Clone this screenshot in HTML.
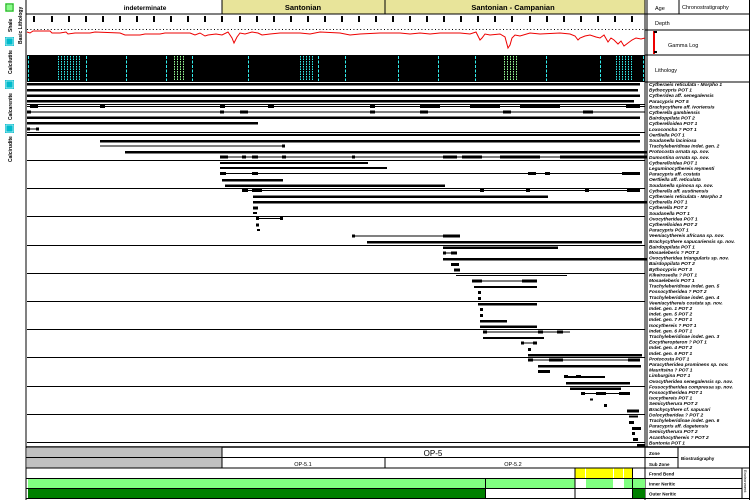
<!DOCTYPE html>
<html><head><meta charset="utf-8"><style>
html,body{margin:0;padding:0;background:#fff;width:750px;height:500px;overflow:hidden}
svg{display:block;font-family:"Liberation Sans",sans-serif}
</style></head><body>
<svg width="750" height="500" viewBox="0 0 750 500" xmlns="http://www.w3.org/2000/svg">
<rect x="0" y="0" width="750" height="500" fill="#fff"/>
<!-- left legend column -->
<line x1="26" y1="0" x2="26" y2="500" stroke="#000" stroke-width="1"/>
<rect x="5" y="3" width="9" height="9" fill="#8f8"/><rect x="6" y="4" width="7" height="7" fill="none" stroke="#060" stroke-width="0.6"/>
<rect x="5" y="37" width="9" height="9" fill="#0bc"/><rect x="6" y="38" width="7" height="7" fill="none" stroke="#fff" stroke-width="0.6"/>
<rect x="5" y="80" width="9" height="9" fill="#0bc"/><rect x="6" y="81" width="7" height="7" fill="none" stroke="#fff" stroke-width="0.6"/>
<rect x="5" y="124" width="9" height="9" fill="#0bc"/><rect x="6" y="125" width="7" height="7" fill="none" stroke="#fff" stroke-width="0.6"/>
<g font-size="5" font-weight="bold" fill="#000">
<text transform="translate(22,44) rotate(-90)">Basic Lithology</text>
<text transform="translate(12,32) rotate(-90)">Shale</text>
<text transform="translate(12,74) rotate(-90)">Calcilutite</text>
<text transform="translate(12,120) rotate(-90)">Calcarenite</text>
<text transform="translate(12,162) rotate(-90)">Calcirudite</text>
</g>
<!-- age header -->
<rect x="222" y="0" width="163" height="14" fill="#e8e49a"/>
<rect x="385" y="0" width="260" height="14" fill="#e8e49a"/>
<line x1="222" y1="0" x2="222" y2="14" stroke="#000"/>
<line x1="385" y1="0" x2="385" y2="14" stroke="#000"/>
<line x1="26" y1="14" x2="750" y2="14" stroke="#000"/>
<g font-size="6.5" fill="#000" text-anchor="middle" font-weight="bold">
<text x="145" y="10">indeterminate</text>
<text x="303" y="10" font-size="7.5">Santonian</text>
<text x="513" y="10" font-size="7.5">Santonian - Campanian</text>
</g>
<!-- right header column -->
<line x1="645" y1="0" x2="645" y2="500" stroke="#000"/>
<line x1="647" y1="0" x2="647" y2="447" stroke="#000"/>
<line x1="679" y1="0" x2="679" y2="14" stroke="#000"/>
<line x1="645" y1="30" x2="750" y2="30" stroke="#000"/>
<line x1="645" y1="55" x2="750" y2="55" stroke="#000"/>
<line x1="645" y1="82" x2="750" y2="82" stroke="#000"/>
<g font-size="5.5" fill="#000">
<text x="655" y="10">Age</text><text x="682" y="9">Chronostratigraphy</text>
<text x="655" y="25">Depth</text>
<text x="668" y="47">Gamma Log</text>
<text x="655" y="72">Lithology</text>
</g>
<rect x="653" y="31" width="2" height="23" fill="#e00"/>
<rect x="654" y="31" width="3" height="2" fill="#000"/><rect x="654" y="51" width="3" height="2" fill="#000"/>
<!-- depth row -->
<g fill="#000">
<rect x="33" y="16" width="2" height="6"/><rect x="51" y="16" width="2" height="6"/><rect x="68" y="16" width="2" height="6"/><rect x="85" y="16" width="2" height="6"/><rect x="102" y="16" width="2" height="6"/><rect x="119" y="16" width="2" height="6"/><rect x="136" y="16" width="2" height="6"/><rect x="153" y="16" width="2" height="6"/><rect x="170" y="16" width="2" height="6"/><rect x="187" y="16" width="2" height="6"/><rect x="204" y="16" width="2" height="6"/><rect x="221" y="16" width="2" height="6"/><rect x="239" y="16" width="2" height="6"/><rect x="256" y="16" width="2" height="6"/><rect x="273" y="16" width="2" height="6"/><rect x="290" y="16" width="2" height="6"/><rect x="307" y="16" width="2" height="6"/><rect x="324" y="16" width="2" height="6"/><rect x="341" y="16" width="2" height="6"/><rect x="358" y="16" width="2" height="6"/><rect x="375" y="16" width="2" height="6"/><rect x="392" y="16" width="2" height="6"/><rect x="409" y="16" width="2" height="6"/><rect x="426" y="16" width="2" height="6"/><rect x="443" y="16" width="2" height="6"/><rect x="460" y="16" width="2" height="6"/><rect x="477" y="16" width="2" height="6"/><rect x="494" y="16" width="2" height="6"/><rect x="511" y="16" width="2" height="6"/><rect x="529" y="16" width="2" height="6"/><rect x="546" y="16" width="2" height="6"/><rect x="563" y="16" width="2" height="6"/><rect x="580" y="16" width="2" height="6"/><rect x="597" y="16" width="2" height="6"/><rect x="614" y="16" width="2" height="6"/><rect x="631" y="16" width="2" height="6"/>
</g>
<line x1="27" y1="29.5" x2="645" y2="29.5" stroke="#000" stroke-width="1" stroke-dasharray="1,2.4"/>
<!-- gamma log -->
<polyline fill="none" stroke="#e00" stroke-width="1" points="27,32 30,33 33,31 50,31 52,33 60,33 66,32 68,34 75,33 90,33 95,32 120,33 125,35 140,35 145,34 160,34 165,33 175,33 190,33 195,35 200,33 205,36 208,35 216,34 222,35 228,32 232,38 234,43 237,37 240,33 245,34 252,32 258,33 262,35 270,34 280,33 300,33 310,34 320,32 340,33 350,35 360,34 380,33 400,33 410,34 420,33 430,34 440,33 460,33 470,34 476,32 480,40 482,38 485,34 490,35 500,34 505,37 508,48 510,45 512,38 515,35 520,36 530,33 540,34 560,33 570,34 575,36 578,40 580,38 585,36 590,35 596,37 600,38 604,35 608,42 611,38 614,40 618,44 621,41 624,46 628,43 632,40 636,38 641,39 645,38"/>
<!-- lithology -->
<rect x="27" y="55" width="618" height="27" fill="#000"/>
<g stroke="#3ee" stroke-width="1" stroke-dasharray="3,1.5">
<line x1="28.5" y1="56" x2="28.5" y2="81"/><line x1="86.5" y1="56" x2="86.5" y2="81"/><line x1="126.5" y1="56" x2="126.5" y2="81"/><line x1="166.5" y1="56" x2="166.5" y2="81"/><line x1="192.5" y1="56" x2="192.5" y2="81"/><line x1="248.5" y1="56" x2="248.5" y2="81"/><line x1="318.5" y1="56" x2="318.5" y2="81"/><line x1="345.5" y1="56" x2="345.5" y2="81"/><line x1="398.5" y1="56" x2="398.5" y2="81"/><line x1="438.5" y1="56" x2="438.5" y2="81"/><line x1="475.5" y1="56" x2="475.5" y2="81"/><line x1="546.5" y1="56" x2="546.5" y2="81"/><line x1="600.5" y1="56" x2="600.5" y2="81"/><line x1="643.5" y1="56" x2="643.5" y2="81"/>
</g>
<g stroke="#3ee" stroke-width="1" stroke-dasharray="1.5,1">
<line x1="58.5" y1="56" x2="58.5" y2="81"/><line x1="61.5" y1="56" x2="61.5" y2="81"/><line x1="64.5" y1="56" x2="64.5" y2="81"/><line x1="67.5" y1="56" x2="67.5" y2="81"/><line x1="70.5" y1="56" x2="70.5" y2="81"/><line x1="73.5" y1="56" x2="73.5" y2="81"/><line x1="76.5" y1="56" x2="76.5" y2="81"/><line x1="79.5" y1="56" x2="79.5" y2="81"/>
<line x1="300.5" y1="56" x2="300.5" y2="81"/><line x1="303.5" y1="56" x2="303.5" y2="81"/><line x1="306.5" y1="56" x2="306.5" y2="81"/><line x1="309.5" y1="56" x2="309.5" y2="81"/><line x1="312.5" y1="56" x2="312.5" y2="81"/>
<line x1="616.5" y1="56" x2="616.5" y2="81"/><line x1="619.5" y1="56" x2="619.5" y2="81"/><line x1="622.5" y1="56" x2="622.5" y2="81"/><line x1="625.5" y1="56" x2="625.5" y2="81"/><line x1="628.5" y1="56" x2="628.5" y2="81"/><line x1="631.5" y1="56" x2="631.5" y2="81"/>
</g>
<g stroke="#9f9" stroke-width="1" stroke-dasharray="1.5,1">
<line x1="174.5" y1="56" x2="174.5" y2="81"/><line x1="177.5" y1="56" x2="177.5" y2="81"/><line x1="180.5" y1="56" x2="180.5" y2="81"/><line x1="183.5" y1="56" x2="183.5" y2="81"/>
<line x1="504.5" y1="56" x2="504.5" y2="81"/><line x1="507.5" y1="56" x2="507.5" y2="81"/><line x1="510.5" y1="56" x2="510.5" y2="81"/><line x1="513.5" y1="56" x2="513.5" y2="81"/><line x1="516.5" y1="56" x2="516.5" y2="81"/>
</g>
<!-- separators -->
<g stroke="#000" stroke-width="1">
<line x1="27" y1="104.5" x2="645" y2="104.5"/><line x1="27" y1="132.5" x2="645" y2="132.5"/><line x1="27" y1="160.5" x2="645" y2="160.5"/><line x1="27" y1="188.5" x2="645" y2="188.5"/><line x1="27" y1="216.5" x2="645" y2="216.5"/><line x1="27" y1="245.5" x2="645" y2="245.5"/><line x1="27" y1="273.5" x2="645" y2="273.5"/><line x1="27" y1="301.5" x2="645" y2="301.5"/><line x1="27" y1="329.5" x2="645" y2="329.5"/><line x1="27" y1="357.5" x2="645" y2="357.5"/><line x1="27" y1="386.5" x2="645" y2="386.5"/><line x1="27" y1="414.5" x2="645" y2="414.5"/><line x1="27" y1="442.5" x2="645" y2="442.5"/>
</g>
<line x1="26" y1="447" x2="750" y2="447" stroke="#000" stroke-width="1.5"/>
<!-- ranges -->
<g fill="#000">
<rect x="27" y="83" width="613" height="2.5"/>
<rect x="27" y="89" width="611" height="2.5"/>
<rect x="27" y="94.5" width="613" height="2.5"/>
<rect x="27" y="100" width="607" height="2.5"/>
<rect x="27" y="106" width="618" height="1"/><rect x="30" y="105" width="8" height="3"/><rect x="100" y="105" width="5" height="3"/><rect x="220" y="105" width="5" height="3"/><rect x="268" y="105" width="6" height="3"/><rect x="370" y="105" width="5" height="3"/><rect x="420" y="105" width="20" height="3"/><rect x="470" y="105" width="30" height="3"/><rect x="520" y="105" width="40" height="3"/><rect x="626" y="105" width="14" height="3"/>
<rect x="27" y="111.5" width="618" height="1"/><rect x="27" y="110.5" width="4" height="3"/><rect x="220" y="110.5" width="4" height="3"/><rect x="240" y="110.5" width="8" height="3"/><rect x="370" y="110.5" width="5" height="3"/><rect x="420" y="110.5" width="8" height="3"/><rect x="503" y="110.5" width="8" height="3"/><rect x="583" y="110.5" width="10" height="3"/>
<rect x="27" y="116.5" width="613" height="2.5"/>
<rect x="27" y="122" width="231" height="2.5"/>
<rect x="27" y="128.5" width="11" height="1"/><rect x="27" y="127.5" width="3" height="3"/><rect x="36" y="127.5" width="3" height="3"/>
<rect x="27" y="134" width="613" height="2"/>
<rect x="100" y="140" width="540" height="2.5"/>
<rect x="100" y="145.5" width="183" height="1"/><rect x="282" y="144.5" width="3" height="3"/>
<rect x="125" y="151" width="522" height="2.5"/>
<rect x="220" y="156.5" width="427" height="1"/><rect x="220" y="155.5" width="8" height="3"/><rect x="242" y="155.5" width="4" height="3"/><rect x="252" y="155.5" width="6" height="3"/><rect x="282" y="155.5" width="4" height="3"/><rect x="352" y="155.5" width="3" height="3"/><rect x="443" y="155.5" width="14" height="3"/><rect x="462" y="155.5" width="20" height="3"/><rect x="500" y="155.5" width="40" height="3"/><rect x="560" y="155.5" width="60" height="3"/><rect x="618" y="155.5" width="29" height="3"/>
<rect x="220" y="162" width="148" height="2"/>
<rect x="220" y="167" width="167" height="2"/>
<rect x="220" y="173" width="420" height="1"/><rect x="220" y="172" width="6" height="3"/><rect x="252" y="172" width="6" height="3"/><rect x="528" y="172" width="8" height="3"/><rect x="545" y="172" width="5" height="3"/><rect x="622" y="172" width="18" height="3"/>
<rect x="222" y="179" width="61" height="2.5"/>
<rect x="225" y="184.5" width="220" height="2.5"/>
<rect x="242" y="190" width="398" height="1"/><rect x="242" y="189" width="6" height="3"/><rect x="252" y="189" width="10" height="3"/><rect x="480" y="189" width="4" height="3"/><rect x="526" y="189" width="4" height="3"/><rect x="585" y="189" width="4" height="3"/><rect x="627" y="189" width="13" height="3"/>
<rect x="253" y="195.5" width="295" height="2.5"/>
<rect x="253" y="201" width="394" height="2.5"/>
<rect x="253" y="206.5" width="5" height="3"/>
<rect x="253" y="212" width="4" height="2"/>
<rect x="256" y="218" width="27" height="1"/><rect x="256" y="217" width="3" height="3"/><rect x="280" y="217" width="3" height="3"/>
<rect x="256" y="223.5" width="3" height="3"/>
<rect x="257" y="229" width="3" height="2"/>
<rect x="352" y="235.5" width="108" height="1"/><rect x="352" y="234.5" width="3" height="3"/><rect x="443" y="234.5" width="17" height="3"/>
<rect x="367" y="241" width="275" height="2.5"/>
<rect x="443" y="246.5" width="115" height="2.5"/>
<rect x="443" y="252.5" width="14" height="1"/><rect x="443" y="251.5" width="3" height="3"/><rect x="451" y="251.5" width="6" height="3"/>
<rect x="443" y="258" width="204" height="2.5"/>
<rect x="451" y="263" width="8" height="3"/>
<rect x="454" y="268.5" width="6" height="3"/>
<rect x="456" y="275" width="111" height="1"/>
<rect x="472" y="280.5" width="65" height="1"/><rect x="472" y="279.5" width="10" height="3"/><rect x="522" y="279.5" width="15" height="3"/>
<rect x="474" y="286" width="63" height="2"/>
<rect x="478" y="291" width="3" height="3"/>
<rect x="478" y="297" width="3" height="3"/>
<rect x="478" y="303" width="59" height="2.5"/>
<rect x="480" y="308" width="3" height="3"/>
<rect x="480" y="314" width="3" height="3"/>
<rect x="480" y="320" width="27" height="2.5"/>
<rect x="480" y="325.5" width="57" height="2.5"/>
<rect x="483" y="331.5" width="87" height="1"/><rect x="483" y="330.5" width="4" height="3"/><rect x="538" y="330.5" width="5" height="3"/><rect x="557" y="330.5" width="6" height="3"/>
<rect x="483" y="337" width="61" height="2"/>
<rect x="521" y="342.5" width="16" height="1"/><rect x="521" y="341.5" width="3" height="3"/><rect x="533" y="341.5" width="4" height="3"/>
<rect x="528" y="348" width="3" height="3"/>
<rect x="528" y="354" width="114" height="2.5"/>
<rect x="528" y="359.5" width="112" height="1"/><rect x="528" y="358.5" width="5" height="3"/><rect x="549" y="358.5" width="14" height="3"/><rect x="628" y="358.5" width="12" height="3"/>
<rect x="538" y="365" width="103" height="2.5"/>
<rect x="538" y="370" width="12" height="3"/>
<rect x="564" y="376" width="41" height="2"/><rect x="564" y="375" width="4" height="3"/><rect x="576" y="375" width="5" height="3"/>
<rect x="566" y="382" width="64" height="2.5"/>
<rect x="570" y="387.5" width="51" height="2.5"/>
<rect x="581" y="393" width="49" height="1"/><rect x="581" y="392" width="4" height="3"/><rect x="596" y="392" width="10" height="3"/><rect x="619" y="392" width="11" height="3"/>
<rect x="590" y="398.5" width="3" height="2"/>
<rect x="604" y="404" width="3" height="3"/>
<rect x="627" y="409.5" width="12" height="3"/>
<rect x="629" y="415.5" width="9" height="2"/>
<rect x="629" y="421" width="5" height="3"/>
<rect x="632" y="427" width="9" height="3"/>
<rect x="632" y="432" width="3" height="3"/>
<rect x="633" y="438" width="5" height="3"/>
<rect x="637" y="444" width="8" height="2.5"/>
</g>
<!-- species labels -->
<g font-size="4.8" font-style="italic" font-weight="bold" fill="#000">
<text x="649" y="86">Cytheraeis reticulata - Morpho 1</text>
<text x="649" y="91.6">Bythocypris POT 1</text>
<text x="649" y="97.2">Cytheridea aff. senegalensis</text>
<text x="649" y="102.8">Paracypris POT 5</text>
<text x="649" y="108.4">Brachycythere aff. ivoriensis</text>
<text x="649" y="114">Cytherella gambiensis</text>
<text x="649" y="119.6">Bairdoppilata POT 2</text>
<text x="649" y="125.2">Cytherelloidea POT 1</text>
<text x="649" y="130.8">Loxoconcha ? POT 1</text>
<text x="649" y="136.4">Oertliella POT 1</text>
<text x="649" y="142">Soudanella laciniosa</text>
<text x="649" y="147.6">Trachyleberidinae indet. gen. 2</text>
<text x="649" y="153.2">Protocosta ornata sp. nov.</text>
<text x="649" y="158.8">Dumontina ornata sp. nov.</text>
<text x="649" y="164.4">Cytherelloidea POT 1</text>
<text x="649" y="170">Leguminocythereis reymenti</text>
<text x="649" y="175.6">Paracypris aff. costata</text>
<text x="649" y="181.2">Oertliella aff. reticulata</text>
<text x="649" y="186.8">Soudanella spinosa sp. nov.</text>
<text x="649" y="192.4">Cytherella aff. austinensis</text>
<text x="649" y="198">Cytheraeis reticulata - Morpho 2</text>
<text x="649" y="203.6">Cytherella POT 1</text>
<text x="649" y="209.2">Cytherella POT 2</text>
<text x="649" y="214.8">Soudanella POT 1</text>
<text x="649" y="220.4">Ovocytheridea POT 1</text>
<text x="649" y="226">Cytherelloidea POT 2</text>
<text x="649" y="231.6">Paracypris POT 1</text>
<text x="649" y="237.2">Veeniacythereis africana sp. nov.</text>
<text x="649" y="242.8">Brachycythere sapucariensis sp. nov.</text>
<text x="649" y="248.4">Bairdoppilata POT 1</text>
<text x="649" y="254">Mosaeleberis ? POT 2</text>
<text x="649" y="259.6">Ovocytheridea triangularis sp. nov.</text>
<text x="649" y="265.2">Bairdoppilata POT 2</text>
<text x="649" y="270.8">Bythocypris POT 3</text>
<text x="649" y="276.4">Kikeirosedia ? POT 1</text>
<text x="649" y="282">Mosaeleberis POT 1</text>
<text x="649" y="287.6">Trachyleberidinae indet. gen. 5</text>
<text x="649" y="293.2">Fossocytheridea ? POT 2</text>
<text x="649" y="298.8">Trachyleberidinae indet. gen. 4</text>
<text x="649" y="304.4">Veeniacythereis costata sp. nov.</text>
<text x="649" y="310">Indet. gen. 1 POT 2</text>
<text x="649" y="315.6">Indet. gen. 5 POT 2</text>
<text x="649" y="321.2">Indet. gen. 7 POT 1</text>
<text x="649" y="326.8">Isocythereis ? POT 1</text>
<text x="649" y="332.4">Indet. gen. 6 POT 1</text>
<text x="649" y="338">Trachyleberidinae indet. gen. 3</text>
<text x="649" y="343.6">Eocytheropteron ? POT 1</text>
<text x="649" y="349.2">Indet. gen. 4 POT 2</text>
<text x="649" y="354.8">Indet. gen. 6 POT 1</text>
<text x="649" y="360.4">Protocosta POT 1</text>
<text x="649" y="366">Paracytheridea prominens sp. nov.</text>
<text x="649" y="371.6">Mauritsina ? POT 1</text>
<text x="649" y="377.2">Limburgina POT 1</text>
<text x="649" y="382.8">Ovocytheridea senegalensis sp. nov.</text>
<text x="649" y="388.4">Fossocytheridea compressa sp. nov.</text>
<text x="649" y="394">Fossocytheridea POT 1</text>
<text x="649" y="399.6">Isocythereis POT 1</text>
<text x="649" y="405.2">Semicytherura POT 2</text>
<text x="649" y="410.8">Brachycythere cf. sapucari</text>
<text x="649" y="416.4">Dolocytheridea ? POT 2</text>
<text x="649" y="422">Trachyleberidinae indet. gen. 6</text>
<text x="649" y="427.6">Paracypris aff. dagetensis</text>
<text x="649" y="433.2">Semicytherura POT 2</text>
<text x="649" y="438.8">Acanthocythereis ? POT 2</text>
<text x="649" y="444.4">Buntonia POT 1</text>
</g>
<!-- zone rows -->
<rect x="27" y="447.5" width="195" height="20" fill="#c0c0c0"/>
<line x1="26" y1="457.5" x2="645" y2="457.5" stroke="#000"/>
<line x1="222" y1="447" x2="222" y2="468" stroke="#000"/>
<line x1="385" y1="457.5" x2="385" y2="468" stroke="#000"/>
<line x1="26" y1="468" x2="750" y2="468" stroke="#000"/>
<g fill="#000" text-anchor="middle">
<text x="433" y="456" font-size="8">OP-5</text>
<text x="303" y="466" font-size="5.5">OP-5.1</text>
<text x="513" y="466" font-size="5.5">OP-5.2</text>
</g>
<line x1="678" y1="447" x2="678" y2="468" stroke="#000"/>
<line x1="645" y1="457.5" x2="678" y2="457.5" stroke="#000"/>
<g font-size="4.5" fill="#000" font-weight="bold"><text x="649" y="455">Zone</text><text x="649" y="466">Sub Zone</text><text x="681" y="460">Biostratigraphy</text></g>
<!-- environment -->
<rect x="575" y="468.5" width="10" height="9.5" fill="#ff0"/><rect x="586" y="468.5" width="27" height="9.5" fill="#ff0"/><rect x="614" y="468.5" width="9" height="9.5" fill="#ff0"/><rect x="624" y="468.5" width="8" height="9.5" fill="#ff0"/>
<rect x="28" y="479" width="457" height="9" fill="#80ff80"/><rect x="486" y="479" width="89" height="9" fill="#80ff80"/><rect x="586" y="479" width="27" height="9" fill="#80ff80"/><rect x="624" y="479" width="9" height="9" fill="#80ff80"/><rect x="633" y="479" width="12" height="9" fill="#80ff80"/>
<rect x="28" y="489" width="457" height="9" fill="#008000"/><rect x="633" y="489" width="12" height="9" fill="#008000"/>
<g stroke="#000" stroke-width="1">
<line x1="26" y1="478.5" x2="742" y2="478.5"/><line x1="26" y1="488.5" x2="742" y2="488.5"/><line x1="26" y1="498.5" x2="750" y2="498.5"/>
<line x1="742" y1="468" x2="742" y2="499"/>
<line x1="575" y1="468" x2="575" y2="498"/><line x1="485.5" y1="478" x2="485.5" y2="498"/><line x1="632.5" y1="468" x2="632.5" y2="498"/>
<line x1="749.5" y1="0" x2="749.5" y2="500"/>
</g>
<g font-size="4.5" fill="#000" font-weight="bold"><text x="649" y="475.5">Frond Bend</text><text x="649" y="485.5">Inner Neritic</text><text x="649" y="495.5">Outer Neritic</text></g>
<text transform="translate(744,470) rotate(90)" font-size="4" fill="#000">Environment</text>
</svg>
</body></html>
